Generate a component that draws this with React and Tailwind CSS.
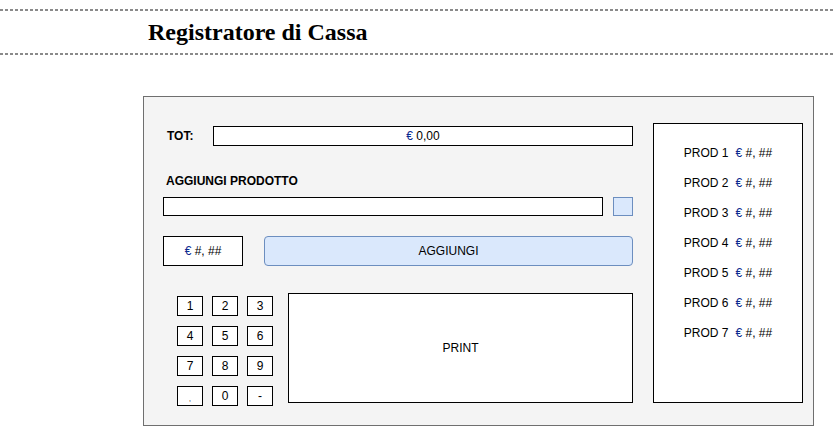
const euro = 'text-[#0b2a8f]'
const tratteggio = 'h-[2px] bg-[repeating-linear-gradient(90deg,#8a8a8a_0px,#8a8a8a_3px,transparent_3px,transparent_5px)]'

function Prezzo({ valore = '#, ##' }) {
  return (
    <span>
      <span className={euro}>€</span> {valore}
    </span>
  )
}

export default function App() {
  const tasti = ['1', '2', '3', '4', '5', '6', '7', '8', '9', ',', '0', '-']
  const prodotti = [1, 2, 3, 4, 5, 6, 7]

  return (
    <div className="w-[835px] h-[427px] bg-white overflow-hidden text-[12px] text-black" style={{ fontFamily: '"Liberation Sans", Arial, sans-serif' }}>

      {/* Intestazione */}
      <div className="pt-[9px]">
        <div className={tratteggio} />
        <div className="h-[42px] flex items-center pl-[148px]">
          <h1 className="text-[24px] font-bold leading-none" style={{ fontFamily: '"Liberation Serif", "Times New Roman", serif' }}>
            Registratore di Cassa
          </h1>
        </div>
        <div className={tratteggio} />
      </div>

      {/* Pannello */}
      <div className="ml-[143px] mt-[41px] w-[671px] h-[330px] border border-[#6f6f6f] bg-[#f4f4f4] flex pl-[19px] pt-[26px] gap-[20px]">

        {/* Colonna sinistra */}
        <div className="w-[470px] flex flex-col">

          {/* Totale */}
          <div className="flex items-center h-[20px] mt-[3px]">
            <span className="w-[50px] pl-[4px] font-bold">TOT:</span>
            <div className="flex-1 h-[20px] border border-black bg-white flex items-center justify-center">
              <Prezzo valore="0,00" />
            </div>
          </div>

          <div className="mt-[27px] pl-[3px] font-bold leading-[16px]">AGGIUNGI PRODOTTO</div>

          {/* Campo prodotto */}
          <div className="flex gap-[10px] mt-[8px]">
            <div className="w-[440px] h-[19px] border border-black bg-white" />
            <div className="w-[20px] h-[19px] border border-[#6c8ebf] bg-[#dae8fc]" />
          </div>

          {/* Prezzo e aggiungi */}
          <div className="flex gap-[21px] mt-[20px]">
            <div className="w-[80px] h-[30px] border border-black bg-white flex items-center justify-center">
              <Prezzo />
            </div>
            <button className="flex-1 h-[30px] rounded-[4px] border border-[#6c8ebf] bg-[#dae8fc]">
              AGGIUNGI
            </button>
          </div>

          {/* Tastierino e stampa */}
          <div className="flex mt-[27px]">
            <div className="w-[125px] pl-[14px] pt-[3px] grid grid-cols-[repeat(3,26px)] gap-x-[9px] gap-y-[10px] content-start">
              {tasti.map((t) => (
                <div key={t} className="h-[20px] border border-black bg-white flex items-center justify-center">
                  {t === ',' ? <span className="text-[7px] mt-[6px]">,</span> : t}
                </div>
              ))}
            </div>
            <div className="flex-1 h-[110px] border border-black bg-white flex items-center justify-center">
              PRINT
            </div>
          </div>
        </div>

        {/* Lista prodotti */}
        <div className="w-[150px] h-[280px] border border-black bg-white flex flex-col items-center pt-[14px]">
          {prodotti.map((n) => (
            <div key={n} className="h-[30px] flex items-center">
              PROD {n}<span className="ml-[7px]"><Prezzo /></span>
            </div>
          ))}
        </div>
      </div>
    </div>
  )
}
